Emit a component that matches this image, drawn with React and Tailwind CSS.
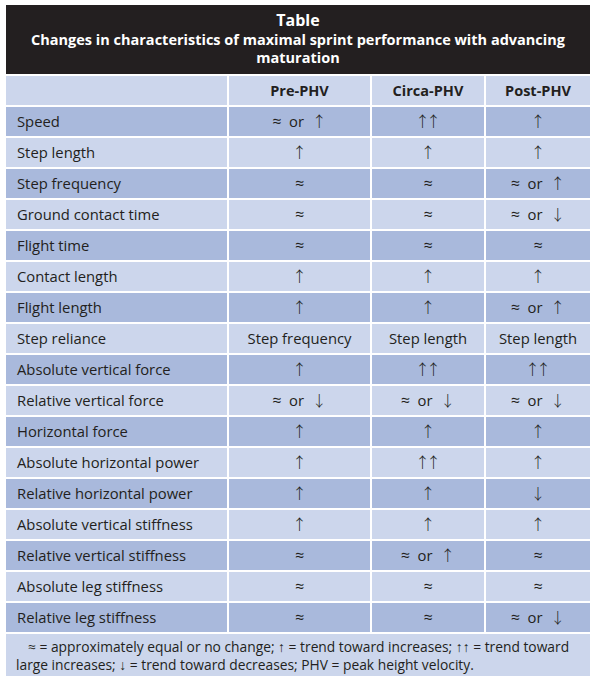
import React from 'react'

const rows = [
  ['Speed', '≈ or ↑', '↑↑', '↑'],
  ['Step length', '↑', '↑', '↑'],
  ['Step frequency', '≈', '≈', '≈ or ↑'],
  ['Ground contact time', '≈', '≈', '≈ or ↓'],
  ['Flight time', '≈', '≈', '≈'],
  ['Contact length', '↑', '↑', '↑'],
  ['Flight length', '↑', '↑', '≈ or ↑'],
  ['Step reliance', 'Step frequency', 'Step length', 'Step length'],
  ['Absolute vertical force', '↑', '↑↑', '↑↑'],
  ['Relative vertical force', '≈ or ↓', '≈ or ↓', '≈ or ↓'],
  ['Horizontal force', '↑', '↑', '↑'],
  ['Absolute horizontal power', '↑', '↑↑', '↑'],
  ['Relative horizontal power', '↑', '↑', '↓'],
  ['Absolute vertical stiffness', '↑', '↑', '↑'],
  ['Relative vertical stiffness', '≈', '≈ or ↑', '≈'],
  ['Absolute leg stiffness', '≈', '≈', '≈'],
  ['Relative leg stiffness', '≈', '≈', '≈ or ↓'],
]

// arrows come from the CJK font: thin, full height
const Sym = ({ text }) => {
  if (!/[↑↓≈]/.test(text)) return text
  const parts = text.split(/([↑↓]+|≈)/)
  return parts.map((p, i) => {
    if (p === '↑↑')
      return <span key={i} className="font-['Noto_Sans_CJK_JP',sans-serif] font-light text-[15px] tracking-[-4px] pr-[4px]">{p}</span>
    if (/[↑↓]/.test(p))
      return <span key={i} className="font-['Noto_Sans_CJK_JP',sans-serif] font-light text-[15px]">{p}</span>
    if (p === '≈')
      return <span key={i} className="text-[16px]">{p}</span>
    return <span key={i}>{p.replace(/ /g, '\u00a0 ')}</span>
  })
}

const App = () => {
  return (
    <div className="bg-white w-[596px] h-[687px] pt-[5px] pl-[6px] font-['Open_Sans',sans-serif] text-[#231f20]">
      <div className="w-[584px] flex flex-col gap-[2px]">
        <div className="bg-[#231f20] text-white text-center font-bold h-[69px] pt-[5px] leading-[18px]">
          <div className="text-[16px] leading-[21px]">Table</div>
          <div className="text-[14.5px] px-4">Changes in characteristics of maximal sprint performance with advancing maturation</div>
        </div>
        <div className="grid grid-cols-[221px_141px_112px_104px] gap-[2px] h-[29px] bg-white">
          <div className="bg-[#ccd6ec]"></div>
          <div className="bg-[#ccd6ec] flex items-center justify-center font-bold text-[14.5px]">Pre-PHV</div>
          <div className="bg-[#ccd6ec] flex items-center justify-center font-bold text-[14.5px]">Circa-PHV</div>
          <div className="bg-[#ccd6ec] flex items-center justify-center font-bold text-[14.5px]">Post-PHV</div>
        </div>
        {rows.map((r, i) => {
          const bg = i % 2 === 0 ? 'bg-[#a9b9dc]' : 'bg-[#ccd6ec]'
          return (
            <div key={i} className="grid grid-cols-[221px_141px_112px_104px] gap-[2px] h-[29px] text-[14.8px] leading-[20px]">
              <div className={bg + ' flex items-center pl-[11px] pb-[2px]'}>{r[0]}</div>
              <div className={bg + ' flex items-center justify-center pb-[2px]'}><span><Sym text={r[1]} /></span></div>
              <div className={bg + ' flex items-center justify-center pb-[2px]'}><span><Sym text={r[2]} /></span></div>
              <div className={bg + ' flex items-center justify-center pb-[2px]'}><span><Sym text={r[3]} /></span></div>
            </div>
          )
        })}
        <div className="bg-[#ccd6ec] h-[42px] px-[10px] pt-[4px] text-[13.8px] leading-[18px] indent-[12px]">
          ≈ = approximately equal or no change; ↑ = trend toward increases; ↑↑ = trend toward large increases; ↓ = trend toward decreases; PHV = peak height velocity.
        </div>
      </div>
    </div>
  )
}

export default App
